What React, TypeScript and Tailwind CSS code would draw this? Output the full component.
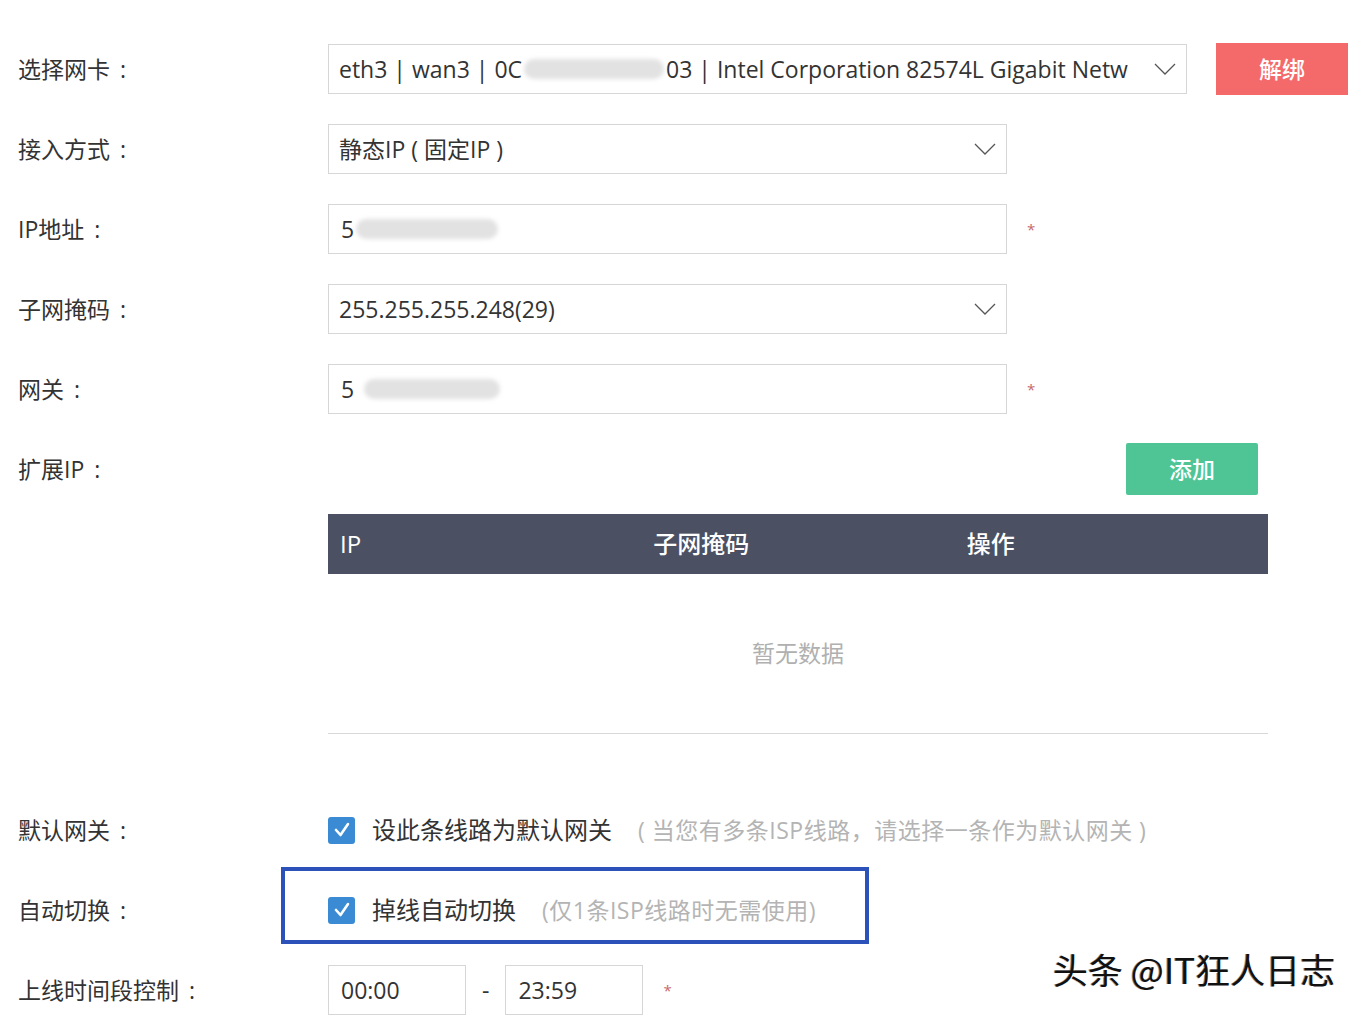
import type { ReactNode } from "react";

const FONT = { fontFamily: '"Open Sans", "Noto Sans CJK SC", sans-serif' };

function Chevron() {
  return (
    <svg width="22" height="12" viewBox="0 0 22 12" className="shrink-0">
      <polyline points="1,1 11,11 21,1" fill="none" stroke="#555" strokeWidth="1.3" />
    </svg>
  );
}

function Blur({ w, className = "" }: { w: number; className?: string }) {
  return (
    <span
      className={"inline-block h-[20px] rounded-full bg-[#e2e2e2] blur-[2px] " + className}
      style={{ width: w }}
    />
  );
}

function Check() {
  return (
    <span className="flex h-[27px] w-[27px] shrink-0 items-center justify-center rounded-[3px] bg-[#3b8ad4]">
      <svg width="18" height="16" viewBox="0 0 18 16">
        <polyline points="3,8 7.5,13 15,2" fill="none" stroke="#fff" strokeWidth="2.6" strokeLinecap="round" strokeLinejoin="round" />
      </svg>
    </span>
  );
}

function Star() {
  return <span className="ml-[20px] text-[15px] leading-none text-[#c86a6a]">*</span>;
}

function Row({ label, children, extra }: { label: string; children?: ReactNode; extra?: ReactNode }) {
  return (
    <div className="relative flex h-[80px] items-center">
      {extra}
      <div className="w-[310px] shrink-0 text-[23px] text-[#333]">
        {label}
        <span className="ml-[10px]">:</span>
      </div>
      <div className="flex flex-1 items-center">{children}</div>
    </div>
  );
}

export default function App() {
  return (
    <div className="relative min-h-[1018px] w-[1366px] bg-white pl-[18px] pt-[29px] text-[#333]" style={FONT}>
      <Row label="选择网卡">
        <div className="flex h-[50px] w-[859px] items-center justify-between border border-[#d6d6d6] pl-[10px] pr-[10px] text-[23px]">
          <span className="flex items-center whitespace-nowrap">
            eth3 | wan3 | 0C
            <Blur w={140} className="mx-[2px]" />
            03 | Intel Corporation 82574L Gigabit Netw
          </span>
          <Chevron />
        </div>
        <button className="ml-[29px] flex h-[52px] w-[132px] items-center justify-center bg-[#f46a6a] text-[23px] font-medium text-white">
          解绑
        </button>
      </Row>
      <Row label="接入方式">
        <div className="flex h-[50px] w-[679px] items-center justify-between border border-[#d6d6d6] pl-[10px] pr-[10px] text-[23px]">
          <span>静态IP ( 固定IP )</span>
          <Chevron />
        </div>
      </Row>
      <Row label="IP地址">
        <div className="flex h-[50px] w-[679px] items-center border border-[#d6d6d6] pl-[12px] text-[23px]">
          5<Blur w={142} className="ml-[2px]" />
        </div>
        <Star />
      </Row>
      <Row label="子网掩码">
        <div className="flex h-[50px] w-[679px] items-center justify-between border border-[#d6d6d6] pl-[10px] pr-[10px] text-[23px]">
          <span>255.255.255.248(29)</span>
          <Chevron />
        </div>
      </Row>
      <Row label="网关">
        <div className="flex h-[50px] w-[679px] items-center border border-[#d6d6d6] pl-[12px] text-[23px]">
          5<Blur w={136} className="ml-[10px]" />
        </div>
        <Star />
      </Row>
      <Row label="扩展IP">
        <div className="flex w-[930px] justify-end">
          <button className="flex h-[52px] w-[132px] items-center justify-center rounded-[2px] bg-[#4fc596] text-[23px] font-medium text-white">
            添加
          </button>
        </div>
      </Row>

      {/* ext ip table */}
      <div className="ml-[310px] mt-[5px] w-[940px]">
        <div className="grid h-[60px] grid-cols-3 items-center bg-[#4b5163] text-[24px] font-medium text-white">
          <span className="pl-[12px]">IP</span>
          <span className="pl-[12px]">子网掩码</span>
          <span className="pl-[12px]">操作</span>
        </div>
        <div className="flex h-[160px] items-center justify-center border-b border-[#d8d8d8] text-[23px] text-[#b0b0b0]">
          暂无数据
        </div>
      </div>

      <div className="mt-[56px]">
        <Row label="默认网关">
          <Check />
          <span className="ml-[17px] text-[24px]">设此条线路为默认网关</span>
          <span className="ml-[26px] text-[23px] tracking-[0.5px] text-[#b4b4b4]">( 当您有多条ISP线路，请选择一条作为默认网关 )</span>
        </Row>
        <Row
          label="自动切换"
          extra={<div className="absolute left-[263px] top-[-3px] h-[77px] w-[588px] border-4 border-[#2c51b9]" />}
        >
          <Check />
          <span className="ml-[17px] text-[24px]">掉线自动切换</span>
          <span className="ml-[26px] text-[23px] tracking-[0.5px] text-[#b4b4b4]">(仅1条ISP线路时无需使用)</span>
        </Row>
        <Row label="上线时间段控制">
          <div className="flex h-[50px] w-[138px] items-center border border-[#d6d6d6] pl-[12px] text-[23px]">00:00</div>
          <span className="mx-[16px] text-[23px]">-</span>
          <div className="flex h-[50px] w-[138px] items-center border border-[#d6d6d6] pl-[12px] text-[23px]">23:59</div>
          <Star />
        </Row>
      </div>

      <div
        className="absolute left-[1053px] top-[943px] text-[35px] text-[#111] [text-shadow:1px_1px_0_#fff,-1px_0_0_#888]"
        style={{ fontFamily: '"Noto Sans CJK SC", sans-serif' }}
      >
        头条 @IT狂人日志
      </div>
    </div>
  );
}
